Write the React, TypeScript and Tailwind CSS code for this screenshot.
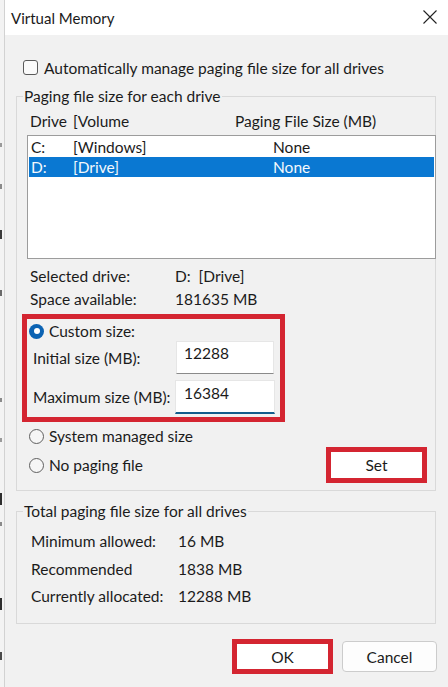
import React from "react";

const RED = "border-[#d42531]";

function Radio({ checked }: { checked?: boolean }) {
  if (checked) {
    return (
      <span className="w-[15px] h-[15px] rounded-full bg-[#0c63b3] flex items-center justify-center shrink-0">
        <span className="w-[6px] h-[6px] rounded-full bg-white" />
      </span>
    );
  }
  return <span className="w-[15px] h-[15px] rounded-full border border-[#5f5f5f] bg-[#f6f6f6] shrink-0" />;
}

export default function App() {
  return (
    <div className="w-[448px] h-[687px] flex overflow-hidden bg-[#f1f1f1] text-[#1b1b1b] font-[family-name:Lato,sans-serif] text-[15.5px] leading-[20px]">
      <div className="w-[5px] h-full bg-[#f3f3f3] border-r border-[#d2d2d2] shrink-0">
        <svg width="4" height="687" viewBox="0 0 4 687">
          <rect x="0" y="143" width="2" height="4" fill="#9a9a9a" />
          <rect x="0" y="184" width="2" height="5" fill="#8a8a8a" />
          <rect x="0" y="230" width="2" height="9" fill="#3a3a3a" />
          <rect x="0" y="290" width="2" height="6" fill="#6a6a6a" />
          <rect x="0" y="398" width="2" height="4" fill="#8a8a8a" />
          <rect x="0" y="438" width="2" height="4" fill="#9a9a9a" />
          <rect x="0" y="493" width="2" height="12" fill="#2e2e2e" />
          <rect x="0" y="522" width="2" height="4" fill="#8a8a8a" />
          <rect x="0" y="598" width="2" height="12" fill="#2e2e2e" />
          <rect x="0" y="652" width="2" height="8" fill="#4a4a4a" />
        </svg>
      </div>
      <div className="flex-1 flex flex-col">
        <div className="h-[35px] bg-white flex items-center justify-between pl-[6px] pr-[11px] shrink-0">
          <span className="text-[15px] text-[#1a1a1a]">Virtual Memory</span>
          <svg width="14" height="14" viewBox="0 0 14 14" className="mb-[2px]">
            <path d="M0.5 0.5 L13.5 13.5 M13.5 0.5 L0.5 13.5" stroke="#222" strokeWidth="1.1" fill="none" />
          </svg>
        </div>

        <div className="mt-[25px] h-[15px] flex items-center pl-[18px] gap-[6px]">
          <span className="w-[15px] h-[15px] rounded-[3px] border border-[#5a5a5a] bg-[#fafafa] shrink-0" />
          <span>Automatically manage paging file size for all drives</span>
        </div>

        <div className="mt-[21px] ml-[11px] w-[420px] h-[395px] border border-[#d9d9d9] relative flex flex-col shrink-0">
          <span className="absolute left-[6px] top-[-11px] px-[1px] bg-[#f1f1f1]">Paging file size for each drive</span>
          <div className="mt-[14px] h-[20px] flex items-center pl-[13px]">
            <span className="w-[43px]">Drive</span>
            <span className="w-[162px]">[Volume</span>
            <span>Paging File Size (MB)</span>
          </div>
          <div className="mt-[4px] ml-[10px] mr-[-1px] h-[124px] border border-[#9c9c9c] bg-white p-[1px]">
            <div className="h-[20px] flex items-center pl-[2px]">
              <span className="w-[42px]">C:</span>
              <span className="w-[200px]">[Windows]</span>
              <span>None</span>
            </div>
            <div className="h-[20px] flex items-center pl-[2px] bg-[#0a78d2] text-[#f4f8fc]">
              <span className="w-[42px]">D:</span>
              <span className="w-[200px]">[Drive]</span>
              <span>None</span>
            </div>
          </div>
          <div className="mt-[7px] h-[20px] flex items-center pl-[13px]">
            <span className="w-[145px]">Selected drive:</span>
            <span>D:&nbsp; [Drive]</span>
          </div>
          <div className="mt-[3px] h-[20px] flex items-center pl-[13px]">
            <span className="w-[145px]">Space available:</span>
            <span>181635 MB</span>
          </div>

          <div className={`mt-[5px] ml-[5px] w-[263px] h-[108px] border-[5px] ${RED} flex flex-col`}>
            <div className="mt-[2px] h-[20px] flex items-center pl-[2px] gap-[5px]">
              <Radio checked />
              <span>Custom size:</span>
            </div>
            <div className="h-[33px] flex items-center">
              <span className="w-[149px] pl-[6px]">Initial size (MB):</span>
              <div className="w-[98px] h-[33px] bg-white border border-[#e6e6e6] border-b-[#8a8a8a] pl-[7px] pt-[1px]">12288</div>
            </div>
            <div className="mt-[6px] h-[34px] flex items-center">
              <span className="w-[148px] pl-[6px]">Maximum size (MB):</span>
              <div className="w-[100px] h-[34px] bg-white border border-[#e6e6e6] border-b-2 border-b-[#135d8c] pl-[8px] pt-[2px]">16384</div>
            </div>
          </div>

          <div className="mt-[4px] h-[20px] flex items-center pl-[12px] gap-[5px]">
            <Radio />
            <span>System managed size</span>
          </div>
          <div className="mt-[1px] h-[36px] flex items-center justify-between pl-[12px] pr-[8px]">
            <div className="flex items-center gap-[5px]">
              <Radio />
              <span>No paging file</span>
            </div>
            <div className={`w-[101px] h-[36px] border-[5px] ${RED} bg-white flex items-center justify-center`}>Set</div>
          </div>
        </div>

        <div className="mt-[20px] ml-[11px] w-[420px] h-[113px] border border-[#d9d9d9] relative flex flex-col shrink-0">
          <span className="absolute left-[6px] top-[-11px] px-[1px] bg-[#f1f1f1]">Total paging file size for all drives</span>
          <div className="mt-[19px] h-[20px] flex items-center pl-[14px]">
            <span className="w-[147px]">Minimum allowed:</span>
            <span>16 MB</span>
          </div>
          <div className="mt-[8px] h-[20px] flex items-center pl-[14px]">
            <span className="w-[147px]">Recommended</span>
            <span>1838 MB</span>
          </div>
          <div className="mt-[7px] h-[20px] flex items-center pl-[14px]">
            <span className="w-[147px]">Currently allocated:</span>
            <span>12288 MB</span>
          </div>
        </div>

        <div className="mt-[15px] h-[35px] flex items-center justify-end pr-[11px] gap-[9px] shrink-0">
          <div className={`w-[101px] h-[35px] border-[5px] ${RED} bg-white flex items-center justify-center`}>OK</div>
          <div className="w-[95px] h-[31px] border border-[#cccccc] rounded-[4px] bg-[#fdfdfd] flex items-center justify-center">Cancel</div>
        </div>
      </div>
    </div>
  );
}
